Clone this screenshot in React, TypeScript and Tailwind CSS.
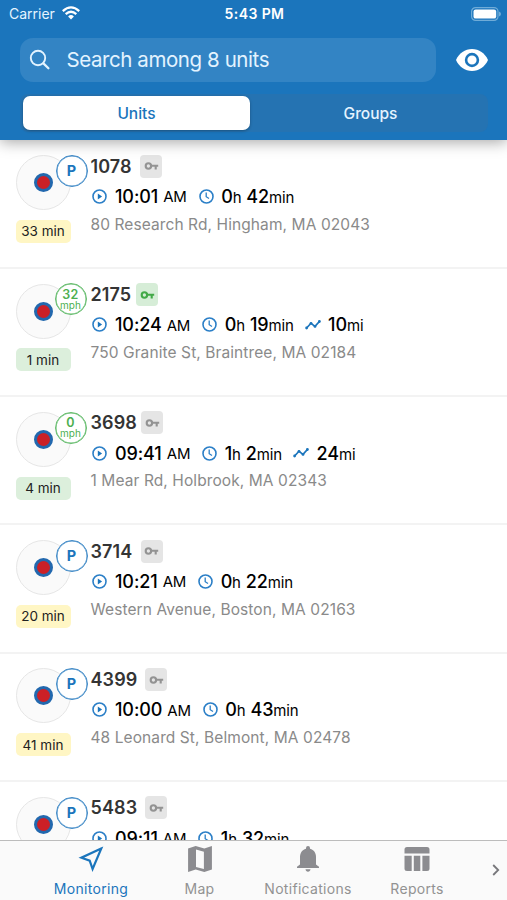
import React from "react";

type Unit = {
  name: string;
  nameWidth: string;
  time: string;
  hours: string;
  minutes: string;
  miles?: string;
  address: string;
  ago: string;
  speed?: string;
  active?: boolean;
};

const units: Unit[] = [
  { name: "1078", nameWidth: "w-[49.5px]", time: "10:01", hours: "0", minutes: "42", address: "80 Research Rd, Hingham, MA 02043", ago: "33 min" },
  { name: "2175", nameWidth: "w-[45.5px]", time: "10:24", hours: "0", minutes: "19", miles: "10", address: "750 Granite St, Braintree, MA 02184", ago: "1 min", speed: "32", active: true },
  { name: "3698", nameWidth: "w-[50.5px]", time: "09:41", hours: "1", minutes: "2", miles: "24", address: "1 Mear Rd, Holbrook, MA 02343", ago: "4 min", speed: "0" },
  { name: "3714", nameWidth: "w-[50px]", time: "10:21", hours: "0", minutes: "22", address: "Western Avenue, Boston, MA 02163", ago: "20 min" },
  { name: "4399", nameWidth: "w-[54.5px]", time: "10:00", hours: "0", minutes: "43", address: "48 Leonard St, Belmont, MA 02478", ago: "41 min" },
  { name: "5483", nameWidth: "w-[54.5px]", time: "09:11", hours: "1", minutes: "32", address: "", ago: "" },
];

function KeyIcon() {
  return (
    <svg viewBox="0 0 15 10" className="h-[10px] w-[15px]" fill="none" stroke="currentColor" strokeWidth="2.1">
      <circle cx="4.4" cy="5" r="2.7" />
      <path d="M7 4.7h7.2M11.7 4.7v3.7" />
    </svg>
  );
}

function PlayIcon() {
  return (
    <svg viewBox="0 0 15 15" className="size-[15px] shrink-0">
      <circle cx="7.5" cy="7.5" r="6.5" fill="none" stroke="#2b7fc7" strokeWidth="1.6" />
      <path d="M5.8 4.5v6l4.3-3z" fill="#1b75bc" />
    </svg>
  );
}

function ClockIcon() {
  return (
    <svg viewBox="0 0 15 15" className="size-[15px] shrink-0" fill="none" stroke="#2b7fc7">
      <circle cx="7.5" cy="7.5" r="6.5" strokeWidth="1.6" />
      <path d="M7.2 3.6v4.1l2.8 1.8" strokeWidth="1.3" />
    </svg>
  );
}

function TrendIcon() {
  return (
    <svg viewBox="0 0 16 12" className="h-3 w-4 shrink-0" fill="#1b75bc">
      <path d="M1.7 8.9L6 4.3l4 3.1 4.5-5" fill="none" stroke="#1b75bc" strokeWidth="1.6" />
      <circle cx="1.6" cy="9" r="1.4" />
      <circle cx="6" cy="4.3" r="1.4" />
      <circle cx="10" cy="7.4" r="1.4" />
      <circle cx="14.4" cy="2.5" r="1.4" />
    </svg>
  );
}

function UnitRow({ unit }: { unit: Unit }) {
  return (
    <div className="flex h-[128.3px] shrink-0 border-b-2 border-[#f3f3f3] pl-[15.5px]">
      <div className="relative w-[75px] shrink-0 pt-[14.7px]">
        <div className="flex size-[55px] items-center justify-center rounded-full border border-[#e6e6e6] bg-[#fafafa]">
          <div className="size-[19px] rounded-full border-[3px] border-[#2268ae] bg-[#cb2027]" />
        </div>
        {unit.speed ? (
          <div className="absolute left-[39px] top-[14.5px] flex size-[32px] flex-col items-center justify-center rounded-full border-[1.5px] border-[#62bb6a] bg-white text-[#4caf50] shadow-[inset_0_0_0_0.5px_#62bb6a]">
            <span className="text-[12.5px] font-semibold leading-[11px] tracking-[0.4px]">{unit.speed}</span>
            <span className="text-[10px] leading-[10px] tracking-[0.1px]">mph</span>
          </div>
        ) : (
          <div className="absolute left-[40px] top-[14.5px] flex size-[32px] items-center justify-center rounded-full border-[1.5px] border-[#3d88c6] bg-white text-[14.5px] font-bold text-[#1b75bc] shadow-[inset_0_0_0_0.5px_#3d88c6]">P</div>
        )}
        <div className={`mt-[9.7px] flex h-[23px] w-[55px] items-center justify-center rounded-[5px] text-[13.5px] text-[#222] ${unit.speed ? "bg-[#dcefdc]" : "bg-[#fff6c4]"}`}>
          {unit.ago}
        </div>
      </div>
      <div className="flex flex-col whitespace-nowrap pt-[14.3px]">
        <div className="flex h-[23px] items-center">
          <span className={`${unit.nameWidth} text-[18px] font-semibold tracking-[0.1px] text-[#343434]`}>{unit.name}</span>
          <span className={`flex h-[23px] w-[22px] items-center justify-center rounded-[4px] ${unit.active ? "bg-[#d6edd7] text-[#43a948]" : "bg-[#e5e5e5] text-[#939393]"}`}>
            <KeyIcon />
          </span>
        </div>
        <div className="ml-[1.5px] mt-[7.2px] flex h-[23px] items-center text-[18px] font-medium text-black">
          <PlayIcon />
          <span className="ml-[8px] tracking-[-0.1px]">{unit.time}</span>
          <span className="ml-[5px] mt-[2px] text-[15px] font-normal tracking-[-0.2px]">AM</span>
          <span className="ml-[12px] flex"><ClockIcon /></span>
          <span className="ml-[7.5px] tracking-[-0.15px]">{unit.hours}<span className="text-[15px] font-normal">h</span></span>
          <span className="ml-[5px] tracking-[-0.15px]">{unit.minutes}<span className="text-[15px] font-normal">min</span></span>
          {unit.miles && (
            <>
              <span className="ml-[11.5px] flex"><TrendIcon /></span>
              <span className="ml-[7px] tracking-[-0.1px]">{unit.miles}<span className="text-[15px] font-normal">mi</span></span>
            </>
          )}
        </div>
        <div className="mt-[4.8px] h-[23px] text-[15.5px] leading-[23px] tracking-[0.09px] text-[#8a8a8a]">{unit.address}</div>
      </div>
    </div>
  );
}

function Header() {
  return (
    <header className="relative z-10 h-[140px] shrink-0 bg-[#1b75bc] text-white shadow-[0_2px_14px_rgba(0,0,0,0.36)]">
      <div className="grid h-[27px] grid-cols-3 items-center">
        <div className="flex items-center gap-[6px] pl-[9px] text-[14px] text-[#e5f4ff]">
          <span className="w-[47px]">Carrier</span>
          <svg viewBox="0 0 18 14" className="-mt-[2px] h-[14px] w-[18px]" fill="none" stroke="white" strokeWidth="2.3">
            <path d="M.8 5.1Q9-2.3 17.2 5.1" />
            <path d="M3.7 8.2Q9 3.4 14.3 8.2" />
            <path d="M6.1 10.4Q9 7.8 11.9 10.4L9 13.6z" fill="white" stroke="none" />
          </svg>
        </div>
        <div className="whitespace-nowrap pl-[2px] text-center text-[14px] font-semibold tracking-[0.4px]">5:43 PM</div>
        <div className="flex justify-end pr-[6px]">
          <svg viewBox="0 0 30 14" className="h-[14px] w-[30px]">
            <rect x=".6" y=".6" width="26.4" height="12.8" rx="4" fill="none" stroke="#70acd8" strokeWidth="1.2" />
            <rect x="2.5" y="2.4" width="22.7" height="9.2" rx="2.2" fill="white" />
            <path d="M28 4.5q2 .7 2 2.5t-2 2.5z" fill="#70acd8" />
          </svg>
        </div>
      </div>
      <div className="mt-[11px] flex h-[44px] items-center pl-[20px]">
        <div className="flex h-[44px] w-[416px] items-center rounded-[13px] bg-[#3384c4] pl-[9px] text-[#e3f3ff]">
          <svg viewBox="0 0 22 22" className="size-[22px]" fill="none" stroke="currentColor" strokeLinecap="round">
            <circle cx="9" cy="9" r="7.2" strokeWidth="1.9" />
            <path d="M14.4 14.4l5 4.9" strokeWidth="2.3" />
          </svg>
          <span className="ml-[15.5px] pt-px text-[20.5px] tracking-[-0.42px]">Search among 8 units</span>
        </div>
        <svg viewBox="0 0 32 22" className="ml-[20px] h-[22px] w-[32px]">
          <path d="M0 11C3 4.2 9 0 16 0s13 4.2 16 11c-3 6.8-9 11-16 11S3 17.8 0 11z" fill="white" />
          <circle cx="16" cy="11" r="5.9" fill="white" stroke="#1b75bc" strokeWidth="2.6" />
        </svg>
      </div>
      <div className="ml-[20px] mt-[12px] flex h-[38px] w-[468px] items-center rounded-[8px] bg-[#2573b2] pl-[3px] text-[15.5px] font-medium">
        <div className="flex h-[34px] w-[227px] shrink-0 items-center justify-center rounded-[7px] bg-white pt-[2px] text-[#1b75bc] shadow-[0_1px_3px_rgba(0,0,0,0.3)]">Units</div>
        <div className="flex w-[241px] shrink-0 items-center justify-center pt-[2px] text-[#e5f4ff]">Groups</div>
      </div>
    </header>
  );
}

function NavBar() {
  return (
    <nav className="relative z-10 flex h-[60px] shrink-0 border-t-[1.5px] border-[#bcbcbc] bg-[#fafafa] pl-[36.5px] text-[14px] tracking-[0.3px] text-[#929292]">
      <div className="flex w-[109px] flex-col items-center text-[#1b75bc]">
        <svg viewBox="0 0 26 26" className="mt-[5px] h-[26px] w-[26px]" fill="none" stroke="currentColor" strokeWidth="2.2">
          <path d="M23.2 2.6L3.4 11.7l8.3 3 2.9 8.300z" />
        </svg>
        <span className="mt-[7px] leading-[20px]">Monitoring</span>
      </div>
      <div className="flex w-[108px] flex-col items-center">
        <svg viewBox="0 0 24 24" className="mt-[5px] size-[26px]" fill="#8c8c90">
          <path fillRule="evenodd" d="M1 2.2L8 0l8 2.2L23 0v21.8L16 24l-8-2.2L1 24zM8.3 3.3v16l7.3 2V5.4z" />
        </svg>
        <span className="mt-[7px] leading-[20px]">Map</span>
      </div>
      <div className="flex w-[109px] flex-col items-center">
        <svg viewBox="0 0 22 26" className="mt-[5px] h-[26px] w-[22px]" fill="#8c8c90">
          <path d="M9 2.7V2q0-2 2-2t2 2v.7c4 1.1 6 4.3 6 8.3v7.5l3 2.3V22H0v-1.200l3-2.300V11c0-4 2-7.200 6-8.300zM8.500 23.300h5c-.2 1.600-1.100 2.500-2.500 2.500s-2.300-.9-2.500-2.500z" />
        </svg>
        <span className="mt-[7px] leading-[20px]">Notifications</span>
      </div>
      <div className="flex w-[109px] flex-col items-center">
        <svg viewBox="0 0 26 26" className="mt-[5px] h-[26px] w-[26px]" fill="#8c8c90">
          <path d="M3 1h20q2.500 0 2.500 2.500v4h-25v-4Q.5 1 3 1zM.5 9.800h7.200V25H3Q.5 25 .5 22.500zM9.800 9.800h6.500V25H9.800zM18.400 9.800h7.100v12.700Q25.500 25 23 25h-4.600z" />
        </svg>
        <span className="mt-[7px] leading-[20px]">Reports</span>
      </div>
      <svg viewBox="0 0 8 12" className="ml-[20.5px] mt-[23px] h-[12px] w-[8px]" fill="none" stroke="#77777b" strokeWidth="1.8">
        <path d="M1.200 1l5 5-5 5" />
      </svg>
    </nav>
  );
}

export default function App() {
  return (
    <div className="flex h-[900px] w-[507px] flex-col overflow-hidden bg-white font-['Inter','Liberation_Sans',sans-serif]">
      <Header />
      <main className="min-h-0 flex-1 overflow-hidden pt-[0.6px]">
        {units.map((unit) => <UnitRow key={unit.name} unit={unit} />)}
      </main>
      <NavBar />
    </div>
  );
}
